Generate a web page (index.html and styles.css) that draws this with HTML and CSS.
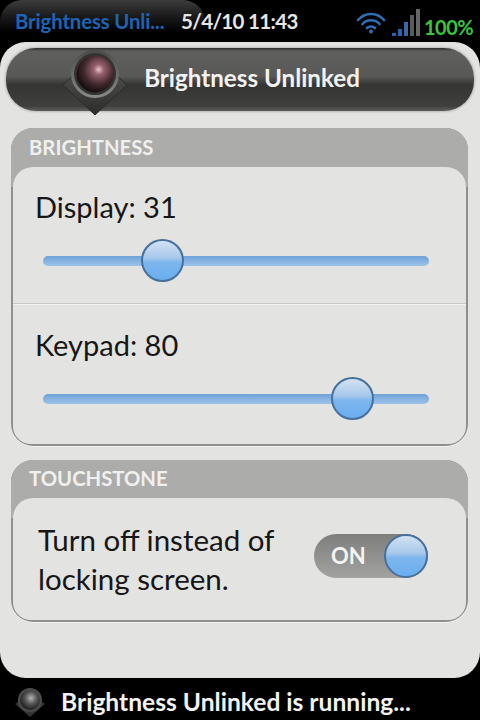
FILE: index.html
```html
<!DOCTYPE html>
<html lang="en">
<head>
<meta charset="utf-8">
<title>Brightness Unlinked</title>
<link rel="stylesheet" href="styles.css">
</head>
<body>
<div class="device">
  <div class="status">
    <div class="app-tab"><span class="app-name">Brightness Unli...</span></div>
    <span class="clock">5/4/10 11:43</span>
    <div class="indicators">
      <svg class="wifi" width="30" height="24" viewBox="0 0 30 24">
        <g fill="none" stroke="#2f6fb5" stroke-width="2.6" stroke-linecap="round">
          <path d="M2 10C9 2 21 2 28 10"/>
          <path d="M6.5 14C11 9 19 9 23.5 14"/>
          <path d="M11 18C13 16 17 16 19 18"/>
        </g>
        <circle cx="15" cy="21.5" r="2" fill="#2f6fb5"/>
      </svg>
      <svg class="signal" width="30" height="34" viewBox="0 0 30 34">
        <rect x="1" y="28" width="4" height="3" fill="#2b62b0"/>
        <rect x="7" y="24" width="4" height="7" fill="#2b62b0"/>
        <rect x="13" y="17" width="4" height="14" fill="#3a68a8"/>
        <rect x="19" y="10" width="4" height="21" fill="#5a5a5a"/>
        <rect x="25" y="4" width="4" height="27" fill="#666"/>
      </svg>
      <span class="battery">100%</span>
    </div>
  </div>

  <main class="card">
    <header class="title-bar">
      <svg class="app-icon" width="70" height="74" viewBox="0 0 70 74">
        <defs>
          <radialGradient id="orb" cx="0.6" cy="0.38" r="0.62">
            <stop offset="0" stop-color="#e8c3cb"/>
            <stop offset="0.22" stop-color="#96626e"/>
            <stop offset="0.65" stop-color="#43282e"/>
            <stop offset="1" stop-color="#15100f"/>
          </radialGradient>
          <linearGradient id="dia" x1="0" y1="0" x2="0" y2="1">
            <stop offset="0" stop-color="#5b5b59"/>
            <stop offset="1" stop-color="#2c2c2b"/>
          </linearGradient>
          <linearGradient id="ring" x1="0" y1="0" x2="0" y2="1">
            <stop offset="0" stop-color="#4a4a48"/>
            <stop offset="1" stop-color="#8a8a86"/>
          </linearGradient>
        </defs>
        <path d="M35 12L67 42L35 72L3 42Z" fill="url(#dia)" stroke="#2a2a29"/>
        <circle cx="35" cy="31" r="24" fill="url(#ring)"/>
        <circle cx="35" cy="31" r="21" fill="#333331"/>
        <circle cx="35" cy="31" r="18.5" fill="url(#orb)"/>
      </svg>
      <h1 class="title">Brightness Unlinked</h1>
    </header>

    <section class="group">
      <h2 class="group-head">BRIGHTNESS</h2>
      <div class="group-body">
        <div class="row slider-row">
          <div class="label">Display: 31</div>
          <div class="slider"><span class="thumb" style="left:25.6%"></span></div>
        </div>
        <div class="row slider-row row-last">
          <div class="label">Keypad: 80</div>
          <div class="slider"><span class="thumb" style="left:74.9%"></span></div>
        </div>
      </div>
    </section>

    <section class="group group-second">
      <h2 class="group-head">TOUCHSTONE</h2>
      <div class="group-body toggle-row">
        <div class="toggle-label">Turn off instead of<br>locking screen.</div>
        <div class="toggle"><span class="toggle-text">ON</span><span class="knob"></span></div>
      </div>
    </section>
  </main>

  <footer class="dashboard">
    <svg class="mini-icon" width="32" height="34" viewBox="0 0 32 34">
      <defs>
        <radialGradient id="mini" cx="0.55" cy="0.4" r="0.6">
          <stop offset="0" stop-color="#b5b5b5"/>
          <stop offset="0.5" stop-color="#555"/>
          <stop offset="1" stop-color="#1c1c1c"/>
        </radialGradient>
      </defs>
      <path d="M16 8L31 19L16 32L1 19Z" fill="#333"/>
      <circle cx="16" cy="15" r="12" fill="#4c4c4c"/>
      <circle cx="16" cy="15" r="10" fill="url(#mini)"/>
    </svg>
    <span class="dash-text">Brightness Unlinked is running...</span>
  </footer>
</div>
</body>
</html>
```
FILE: styles.css
```css
* { box-sizing: border-box; }
html, body { margin: 0; padding: 0; }
body { background: #000; font-family: Lato, "Open Sans", sans-serif; }

.device {
  width: 480px;
  height: 720px;
  display: flex;
  flex-direction: column;
  background: #000;
  overflow: hidden;
}

.status {
  height: 42px;
  flex: none;
  display: flex;
  align-items: flex-start;
  color: #e6e6e6;
}
.app-tab {
  width: 205px;
  height: 41px;
  flex: none;
  padding: 8px 0 0 15px;
  border-radius: 22px 22px 0 0;
  background: linear-gradient(#3d3d3d 0, #1b1b1b 16px, #000 32px);
}
.app-name {
  font-size: 20.4px;
  font-weight: 700;
  line-height: 26px;
  color: #1f63b4;
  letter-spacing: -0.15px;
  white-space: nowrap;
}
.clock {
  width: 138px;
  flex: none;
  margin-left: -24px;
  padding-top: 8px;
  font-size: 20.5px;
  font-weight: 700;
  line-height: 26px;
  white-space: nowrap;
  letter-spacing: -0.65px;
}
.indicators {
  flex: 1;
  display: flex;
  align-items: flex-start;
  padding-left: 37px;
}
.wifi { margin-top: 10px; flex: none; }
.signal { margin: 5px 0 0 5px; flex: none; }
.battery {
  margin: 14px 0 0 3px;
  font-size: 20px;
  font-weight: 700;
  line-height: 26px;
  color: #3bc43c;
  letter-spacing: -0.5px;
  white-space: nowrap;
}

.card {
  height: 636px;
  flex: none;
  padding: 6px 6px 0;
  background: #e3e3e1;
  border-radius: 26px;
}

.title-bar {
  height: 63px;
  display: flex;
  align-items: center;
  position: relative;
  justify-content: center;
  border-radius: 30px;
  background: linear-gradient(#2c2c2b 0, #5f5f5d 5%, #585856 45%, #353534 58%, #3f3f3e 92%, #5e5e5d 100%);
  box-shadow: 0 0 3px #8a8a88;
}
.app-icon {
  position: absolute;
  left: 54px;
  top: -5px;
}
.title {
  margin: 0 0 4px 24px;
  font-size: 24.2px;
  font-weight: 700;
  line-height: 30px;
  color: #f2f2f2;
}

.group {
  margin: 17px 6px 0 5px;
  border-radius: 22px;
  background: #8f8f8d;
  padding: 0 2px 2px;
  box-shadow: 0 1px 0 #f4f4f3;
}
.group-second { margin-top: 14px; }
.group-head {
  margin: 0 -2px -20px;
  height: 59px;
  padding: 7px 0 0 18px;
  border-radius: 22px 22px 0 0;
  background: #acacaa;
  font-size: 20.3px;
  font-weight: 700;
  line-height: 24px;
  color: #f0f0ee;
}
.group-second .group-head { height: 58px; padding-top: 6px; }
.group-body {
  position: relative;
  background: #e3e3e1;
  border-radius: 20px 20px 18px 18px;
}

.slider-row {
  height: 137px;
  padding: 0 37px 0 30px;
  border-bottom: 1px solid #c8c8c6;
  box-shadow: 0 1px 0 #f2f2f0;
}
.row-last { height: 140px; border-bottom: 0; box-shadow: none; padding-top: 1px; }
.label {
  margin-left: -8px;
  padding-top: 23px;
  font-size: 29px;
  line-height: 34px;
  color: #161616;
}
.slider {
  position: relative;
  height: 10px;
  margin-top: 32px;
  border-radius: 6px;
  background: linear-gradient(#6fa3d8, #9cc3ea);
}
.thumb {
  position: absolute;
  top: -17px;
  margin-left: -1px;
  width: 43px;
  height: 43px;
  border-radius: 50%;
  border: 2px solid #47719c;
  background: linear-gradient(#d3e2f3 0, #a9c8ea 42%, #7db6ee 55%, #6aaeef 100%);
}

.toggle-row {
  height: 122px;
  display: flex;
  align-items: center;
  padding: 0 38px 0 25px;
  justify-content: space-between;
}
.toggle-label {
  font-size: 29.5px;
  line-height: 39px;
  color: #161616;
}
.toggle {
  position: relative;
  width: 114px;
  height: 44px;
  margin-top: -6px;
  border-radius: 22px;
  background: linear-gradient(#7e7e7c, #a2a2a0);
  display: flex;
  align-items: center;
  padding-left: 17px;
}
.toggle-text {
  font-size: 22px;
  font-weight: 700;
  color: #f4f4f2;
  line-height: 26px;
}
.knob {
  position: absolute;
  right: 0;
  top: 0;
  width: 44px;
  height: 44px;
  border-radius: 50%;
  border: 2px solid #47719c;
  background: linear-gradient(#d3e2f3 0, #a9c8ea 42%, #7db6ee 55%, #6aaeef 100%);
}

.dashboard {
  flex: 1;
  display: flex;
  align-items: center;
  padding: 6px 0 0 14px;
  color: #f2f2f2;
}
.mini-icon { flex: none; }
.dash-text {
  margin-left: 15px;
  font-size: 24.6px;
  font-weight: 700;
  line-height: 28px;
  white-space: nowrap;
}
```
